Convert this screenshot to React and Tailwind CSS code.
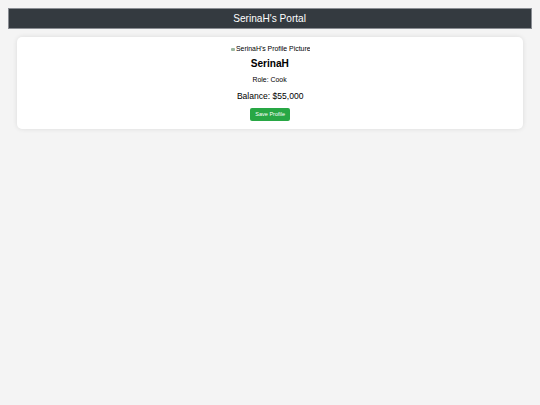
export default function App() {
  return (
    <div className="min-h-[405px] bg-[#f4f4f4] pt-2 font-['Liberation_Sans',Arial,sans-serif]">
      <div className="mx-2 flex h-[21px] items-center justify-center border border-[#8a8d93] bg-[#343a40] text-[11px] text-white">
        <span className="inline-block scale-x-[0.92]">SerinaH's Portal</span>
      </div>
      <div className="mx-[17px] mt-2 flex flex-col items-center rounded-[5px] bg-white pt-[7px] pb-[8px] shadow-[0_0_5px_rgba(0,0,0,0.1)]">
        <div className="flex h-[10px] w-[79px] items-center overflow-hidden whitespace-nowrap text-[7.5px] leading-none text-black">
          <span className="mr-[1px] inline-block h-[3px] w-[4px] shrink-0 rounded-[1px] bg-[#9bb7a0]"></span>
          <span className="inline-block origin-left scale-x-[0.92]">SerinaH's Profile Picture</span>
        </div>
        <div className="mt-[1px] text-[11px] font-bold leading-[16px] text-black">
          <span className="inline-block scale-x-[0.92]">SerinaH</span>
        </div>
        <div className="mt-[4px] text-[7.5px] leading-[10px] text-black">
          <span className="inline-block scale-x-[0.92]">Role: Cook</span>
        </div>
        <div className="mt-[5px] text-[9.3px] leading-[12px] text-black">
          <span className="inline-block scale-x-[0.92]">Balance: $55,000</span>
        </div>
        <button className="mt-[6px] h-[13px] w-[40px] rounded-[2px] bg-[#28a745] text-[6px] text-white">
          <span className="inline-block scale-x-[0.92]">Save Profile</span>
        </button>
      </div>
    </div>
  );
}
